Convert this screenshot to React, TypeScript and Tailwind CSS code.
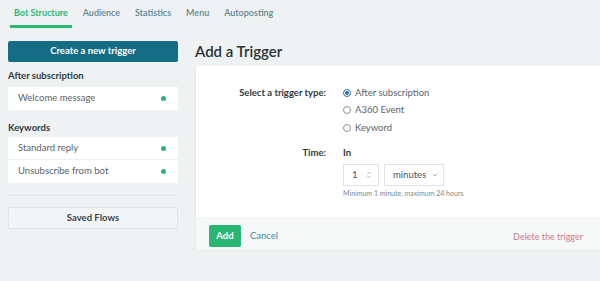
import { ChevronDown, ChevronsUpDown } from "lucide-react";

const tabs = ["Bot Structure", "Audience", "Statistics", "Menu", "Autoposting"];

function TriggerRow({ label, last }: { label: string; last?: boolean }) {
  return (
    <div className={`flex items-center justify-between bg-white pl-[10px] pr-[12px] h-[23px] ${last ? "" : "border-b border-[#eef1f2]"}`}>
      <span className="text-[9.5px] text-[#5a6468]">{label}</span>
      <span className="w-[5px] h-[5px] rounded-full bg-[#2fae7e]" />
    </div>
  );
}

function Radio({ label, checked }: { label: string; checked?: boolean }) {
  return (
    <label className="flex items-center gap-[4px] h-[17.5px] text-[9.5px] text-[#5a6468]">
      <span className={`w-[8px] h-[8px] rounded-full border flex items-center justify-center ${checked ? "border-[#2b6cb0]" : "border-[#8a9194]"}`}>
        {checked && <span className="w-[4px] h-[4px] rounded-full bg-[#2b6cb0]" />}
      </span>
      {label}
    </label>
  );
}

export default function App() {
  return (
    <div className="w-[600px] h-[281px] overflow-hidden bg-[#eef2f3] font-['Lato',sans-serif] text-[#2f3a3e]">
      <nav className="flex gap-[15px] px-[14px] h-[28px]">
        {tabs.map((t, i) => (
          <div
            key={t}
            className={`flex items-center pb-[2px] text-[9px] ${i === 0 ? "text-[#2bb673] font-bold relative" : "text-[#628591] font-semibold"}`}
          >
            {t}
            {i === 0 && <span className="absolute left-[-4px] right-[-4px] bottom-0 h-[3px] bg-[#2bb673]" />}
          </div>
        ))}
      </nav>

      <div className="flex gap-[17px] pl-[8px] pt-[13px]">
        <aside className="w-[170px] shrink-0">
          <button className="block w-full h-[21px] rounded-[2px] bg-[#146d85] text-white text-[9.5px] font-bold">
            Create a new trigger
          </button>

          <div className="mt-[7px] mb-[4px] text-[9.5px] leading-[14px] font-bold">After subscription</div>
          <TriggerRow label="Welcome message" last />

          <div className="mt-[11px] mb-[2px] text-[9.5px] leading-[14px] font-bold">Keywords</div>
          <div>
            <TriggerRow label="Standard reply" />
            <TriggerRow label="Unsubscribe from bot" last />
          </div>

          <div className="mt-[12px] h-[2px] border-t border-[#e3e8ea] bg-[#f3f6f7]" />

          <button className="block mt-[10px] w-full h-[22px] border border-[#dfe5e7] bg-[#f2f5f6] rounded-[2px] text-[9.5px] font-bold text-[#3b4549]">
            Saved Flows
          </button>
        </aside>

        <main className="w-[410px] shrink-0">
          <h1 className="h-[20px] flex items-center text-[15px] font-semibold text-[#2a3236]">
            Add a Trigger
          </h1>
          <div className="mt-[5px] border-l border-[#e6eaeb]">
            <div className="bg-white pt-[18px] pb-[20px]">
              <div className="flex">
                <div className="w-[130px] text-right text-[9.5px] font-bold pt-[2px]">Select a trigger type:</div>
                <div className="ml-[17px]">
                  <Radio label="After subscription" checked />
                  <Radio label="A360 Event" />
                  <Radio label="Keyword" />
                </div>
              </div>

              <div className="flex mt-[9px]">
                <div className="w-[130px] text-right text-[9.5px] font-bold">Time:</div>
                <div className="ml-[17px]">
                  <div className="text-[9.5px] font-bold">In</div>
                  <div className="flex gap-[5px] mt-[4px]">
                    <div className="w-[36px] h-[22px] border border-[#dfe4e6] bg-white flex items-center justify-between pl-[8px] pr-[5px] text-[9.5px] text-[#4b5559]">
                      1
                      <ChevronsUpDown className="w-[8px] h-[8px] text-[#9aa3a6]" />
                    </div>
                    <div className="w-[60px] h-[22px] border border-[#dfe4e6] bg-white flex items-center justify-between pl-[8px] pr-[4px] text-[9.5px] text-[#4b5559]">
                      minutes
                      <ChevronDown className="w-[8px] h-[8px] text-[#7b8589]" />
                    </div>
                  </div>
                  <div className="mt-[2px] text-[7px] text-[#7e888c]">Minimum 1 minute, maximum 24 hours</div>
                </div>
              </div>
            </div>

            <div className="flex items-center bg-[#f7f9f9] border-t border-b border-[#edf0f1] h-[33px] pl-[13px] pr-[22px] pt-[3px]">
              <button className="w-[32px] h-[22px] rounded-[2px] bg-[#2bb673] text-white text-[9.5px] font-bold">Add</button>
              <span className="ml-[9px] text-[9.5px] text-[#3d8a9a]">Cancel</span>
              <span className="ml-auto text-[9px] text-[#c67a8b]">Delete the trigger</span>
            </div>
          </div>
        </main>
      </div>
    </div>
  );
}
